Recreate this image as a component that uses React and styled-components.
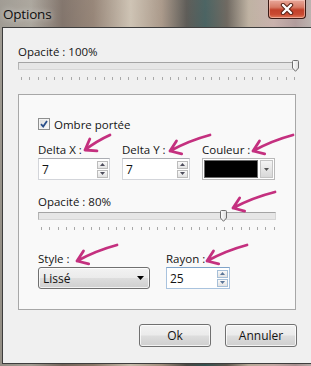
import styled, { createGlobalStyle } from 'styled-components';

const GlobalStyle = createGlobalStyle`
  html, body {
    margin: 0;
    padding: 0;
  }
  body {
    width: 311px;
    height: 366px;
    overflow: hidden;
    font-family: "Open Sans", "Noto Sans", sans-serif;
    font-size: 11.5px;
    color: #141414;
  }
`;

const Window = styled.div`
  position: relative;
  width: 311px;
  height: 366px;
  display: flex;
  flex-direction: column;
  background:
    linear-gradient(180deg, rgba(255, 255, 255, 0.12), rgba(255, 255, 255, 0) 70%),
    linear-gradient(90deg, #948f86 0%, #a29c92 10%, #73645a 20%, #8a7768 30%,
      #c8bcab 42%, #a08d7c 52%, #4a4843 60%, #34504f 66%, #5d564d 73%,
      #b7a997 80%, #c2a8a3 88%, #a89090 95%, #b4aaa6 100%);
`;

const TitleBar = styled.div`
  height: 27px;
  display: flex;
  align-items: flex-start;
  justify-content: space-between;
`;

const Title = styled.span`
  margin: 5px 0 0 3px;
  font-size: 13.5px;
  letter-spacing: -0.2px;
  color: #0e0e0e;
  text-shadow: 0 0 6px rgba(255, 255, 255, 0.75);
`;

const CloseButton = styled.div`
  width: 38px;
  height: 19px;
  margin-right: 5px;
  box-sizing: border-box;
  border: 1px solid #3b1a14;
  border-top: none;
  border-radius: 0 0 4px 4px;
  background: linear-gradient(180deg, #e9a89a 0%, #d77b66 40%, #c2412a 55%, #c94a32 80%, #e07a5a 100%);
  box-shadow: inset 0 0 0 1px rgba(255, 220, 210, 0.5);
  display: flex;
  align-items: center;
  justify-content: center;
`;

const Client = styled.div`
  flex: 1;
  margin: 0 0 2px 2px;
  border: 1px solid #3d3d3d;
  border-right: none;
  background: #f0f0f0;
  padding: 16px 15px 0 15px;
  display: flex;
  flex-direction: column;
`;

const Label = styled.div`
  height: 16px;
  line-height: 16px;
  white-space: nowrap;
`;

const SliderBox = styled.div`
  display: flex;
  flex-direction: column;
`;

const SliderRail = styled.div`
  position: relative;
  height: 12px;
`;

const Track = styled.div`
  margin-top: 2px;
  height: 8px;
  box-sizing: border-box;
  border: 1px solid #d6d6d6;
  border-top-color: #a4a4a4;
  border-left-color: #b4b4b4;
  background: #e6e6e6;
  margin-right: ${(p) => p.$trim}px;
`;

const Thumb = styled.svg`
  position: absolute;
  top: 0;
`;

const Ticks = styled.div`
  margin: 5px ${(p) => p.$right}px 0 ${(p) => p.$left}px;
  height: 3px;
  display: flex;
  justify-content: space-between;
`;

const Tick = styled.span`
  width: 1px;
  height: 3px;
  background: #a9a9a9;
`;

const GroupBox = styled.div`
  margin-top: 14px;
  border: 1px solid #a7a7a7;
  background: #f9f9f9;
  padding: 21px 19px 20px 19px;
  display: flex;
  flex-direction: column;
`;

const CheckRow = styled.div`
  display: flex;
  align-items: center;
  height: 16px;
  gap: 4px;
`;

const CheckBox = styled.div`
  width: 12px;
  height: 12px;
  box-sizing: border-box;
  border: 1px solid #8e8f8f;
  background: linear-gradient(135deg, #dcdcdc, #fbfbfb);
  box-shadow: inset 0 0 0 1px #f4f4f4;
  display: flex;
  align-items: center;
  justify-content: center;
`;

const FieldRow = styled.div`
  display: flex;
  gap: ${(p) => p.$gap}px;
  margin-top: ${(p) => p.$top}px;
`;

const Field = styled.div`
  width: ${(p) => p.$w}px;
  display: flex;
  flex-direction: column;
`;

const TextBox = styled.div`
  height: 22px;
  box-sizing: border-box;
  border: 1px solid ${(p) => (p.$hot ? '#a9c3de' : '#d3d5da')};
  border-top-color: ${(p) => (p.$hot ? '#7fa3c8' : '#abadb3')};
  background: #fff;
  display: flex;
  align-items: center;
  justify-content: space-between;
  padding: 0 1px 0 3px;
  font-size: 12px;
`;

const Spin = styled.div`
  display: flex;
  flex-direction: column;
  gap: 1px;
`;

const SpinButton = styled.div`
  width: 11px;
  height: 8px;
  box-sizing: border-box;
  border: 1px solid ${(p) => (p.$hot ? '#a6bfd8' : '#bcbcbc')};
  background: linear-gradient(180deg, #fafafa, #e2e2e2);
  display: flex;
  align-items: center;
  justify-content: center;
`;

const ColorPicker = styled.div`
  height: 22px;
  box-sizing: border-box;
  border: 1px solid #b9b9b9;
  background: #fff;
  padding: 1px;
  display: flex;
  gap: 2px;
`;

const Swatch = styled.div`
  flex: 1;
  background: #000;
  border: 1px solid #6a6a6a;
`;

const DropButton = styled.div`
  width: 11px;
  border: 1px solid #c4c4c4;
  background: linear-gradient(180deg, #f4f4f4, #d8d8d8);
  display: flex;
  align-items: center;
  justify-content: center;
`;

const ButtonBase = styled.div`
  box-sizing: border-box;
  border: 1px solid #707070;
  border-radius: 3px;
  background: linear-gradient(180deg, #f2f2f2 0%, #ebebeb 48%, #dddddd 52%, #cfcfcf 100%);
  box-shadow: inset 0 0 0 1px rgba(255, 255, 255, 0.75);
  display: flex;
  align-items: center;
`;

const Select = styled(ButtonBase)`
  height: 22px;
  padding: 0 5px 0 4px;
  justify-content: space-between;
  font-size: 12px;
`;

const ButtonRow = styled.div`
  margin: 14px -1px 0 0;
  display: flex;
  justify-content: flex-end;
  gap: 14px;
`;

const Button = styled(ButtonBase)`
  width: 72px;
  height: 23px;
  justify-content: center;
  font-size: 12px;
`;

const Overlay = styled.svg`
  position: absolute;
  inset: 0;
  pointer-events: none;
`;

const Up = ({ hot }) => (
  <svg width="5" height="3" viewBox="0 0 5 3"><path d="M0 3 L2.5 0 L5 3 Z" fill={hot ? '#5a7598' : '#4d4d5c'} /></svg>
);
const Down = ({ hot }) => (
  <svg width="5" height="3" viewBox="0 0 5 3"><path d="M0 0 L2.5 3 L5 0 Z" fill={hot ? '#5a7598' : '#4d4d5c'} /></svg>
);

const Spinner = ({ value, hot }) => (
  <TextBox $hot={hot}>
    <span>{value}</span>
    <Spin>
      <SpinButton $hot={hot}><Up hot={hot} /></SpinButton>
      <SpinButton $hot={hot}><Down hot={hot} /></SpinButton>
    </Spin>
  </TextBox>
);

const Slider = ({ pos, ticks, tickLeft, tickRight, trim }) => (
  <SliderBox>
    <SliderRail>
      <Track $trim={trim} />
      <Thumb width="7" height="12" viewBox="0 0 7 12" style={{ left: pos }}>
        <defs>
          <linearGradient id="tg" x1="0" x2="1">
            <stop offset="0" stopColor="#ffffff" />
            <stop offset="1" stopColor="#dcdcdc" />
          </linearGradient>
        </defs>
        <path d="M0.5 1.5 Q0.5 0.5 1.5 0.5 H5.5 Q6.5 0.5 6.5 1.5 V8 L3.5 11.3 L0.5 8 Z" fill="url(#tg)" stroke="#6f6f6f" strokeWidth="1" />
      </Thumb>
    </SliderRail>
    <Ticks $left={tickLeft} $right={tickRight}>
      {Array.from({ length: ticks }, (_, i) => <Tick key={i} />)}
    </Ticks>
  </SliderBox>
);

const arrows = [
  [[85, 150], [110, 135]],
  [[170, 151], [210, 135]],
  [[253, 151], [293, 135]],
  [[233, 208], [275, 192]],
  [[77, 261], [117, 245]],
  [[207, 261], [247, 245]],
];

const arrowPath = ([tx, ty], [sx, sy]) => {
  const ang = Math.atan2(sy - ty, sx - tx);
  const L = 12;
  const s = 0.62;
  const b1 = [tx + L * Math.cos(ang - s), ty + L * Math.sin(ang - s)];
  const b2 = [tx + L * Math.cos(ang + s), ty + L * Math.sin(ang + s)];
  const cx = (tx + sx) / 2 + (sy - ty) * 0.06;
  const cy = (ty + sy) / 2 - (sx - tx) * 0.06;
  return `M${sx} ${sy} Q${cx} ${cy} ${tx} ${ty} M${b1[0]} ${b1[1]} L${tx} ${ty} L${b2[0]} ${b2[1]}`;
};

const App = () => (
  <>
    <GlobalStyle />
    <Window>
      <TitleBar>
        <Title>Options</Title>
        <CloseButton>
          <svg width="14" height="12" viewBox="0 0 14 12">
            <path d="M3 2 L11 10 M11 2 L3 10" stroke="#5a2418" strokeWidth="4.4" strokeLinecap="round" />
            <path d="M3 2 L11 10 M11 2 L3 10" stroke="#ffffff" strokeWidth="2.4" strokeLinecap="round" />
          </svg>
        </CloseButton>
      </TitleBar>
      <Client>
        <Label>Opacité : 100%</Label>
        <Slider pos={274} ticks={34} tickLeft={3} tickRight={1} trim={1} />
        <GroupBox>
          <CheckRow>
            <CheckBox>
              <svg width="8" height="8" viewBox="0 0 8 8">
                <path d="M1 4.2 L3.2 6.5 L7 1" fill="none" stroke="#2a4f8a" strokeWidth="1.8" />
              </svg>
            </CheckBox>
            <span>Ombre portée</span>
          </CheckRow>
          <FieldRow $gap={12} $top={10}>
            <Field $w={72}>
              <Label>Delta X :</Label>
              <Spinner value="7" />
            </Field>
            <Field $w={68}>
              <Label>Delta Y :</Label>
              <Spinner value="7" />
            </Field>
            <Field $w={73}>
              <Label>Couleur :</Label>
              <ColorPicker>
                <Swatch />
                <DropButton>
                  <svg width="5" height="3" viewBox="0 0 5 3"><path d="M0 0 L2.5 3 L5 0 Z" fill="#555" /></svg>
                </DropButton>
              </ColorPicker>
            </Field>
          </FieldRow>
          <FieldRow $gap={0} $top={14}>
            <Field $w={239}>
              <Label>Opacité : 80%</Label>
              <Slider pos={182} ticks={29} tickLeft={3} tickRight={1} trim={0} />
            </Field>
          </FieldRow>
          <FieldRow $gap={16} $top={21}>
            <Field $w={112}>
              <Label>Style :</Label>
              <Select>
                <span>Lissé</span>
                <svg width="7" height="4" viewBox="0 0 7 4"><path d="M0 0 L3.5 4 L7 0 Z" fill="#000" /></svg>
              </Select>
            </Field>
            <Field $w={64}>
              <Label>Rayon :</Label>
              <Spinner value="25" hot />
            </Field>
          </FieldRow>
        </GroupBox>
        <ButtonRow>
          <Button>Ok</Button>
          <Button>Annuler</Button>
        </ButtonRow>
      </Client>
      <Overlay width="311" height="366" viewBox="0 0 311 366">
        {arrows.map(([tip, tail], i) => (
          <path key={i} d={arrowPath(tip, tail)} fill="none" stroke="#c4307f" strokeWidth="2.8" strokeLinecap="round" strokeLinejoin="round" />
        ))}
      </Overlay>
    </Window>
  </>
);

export default App;
